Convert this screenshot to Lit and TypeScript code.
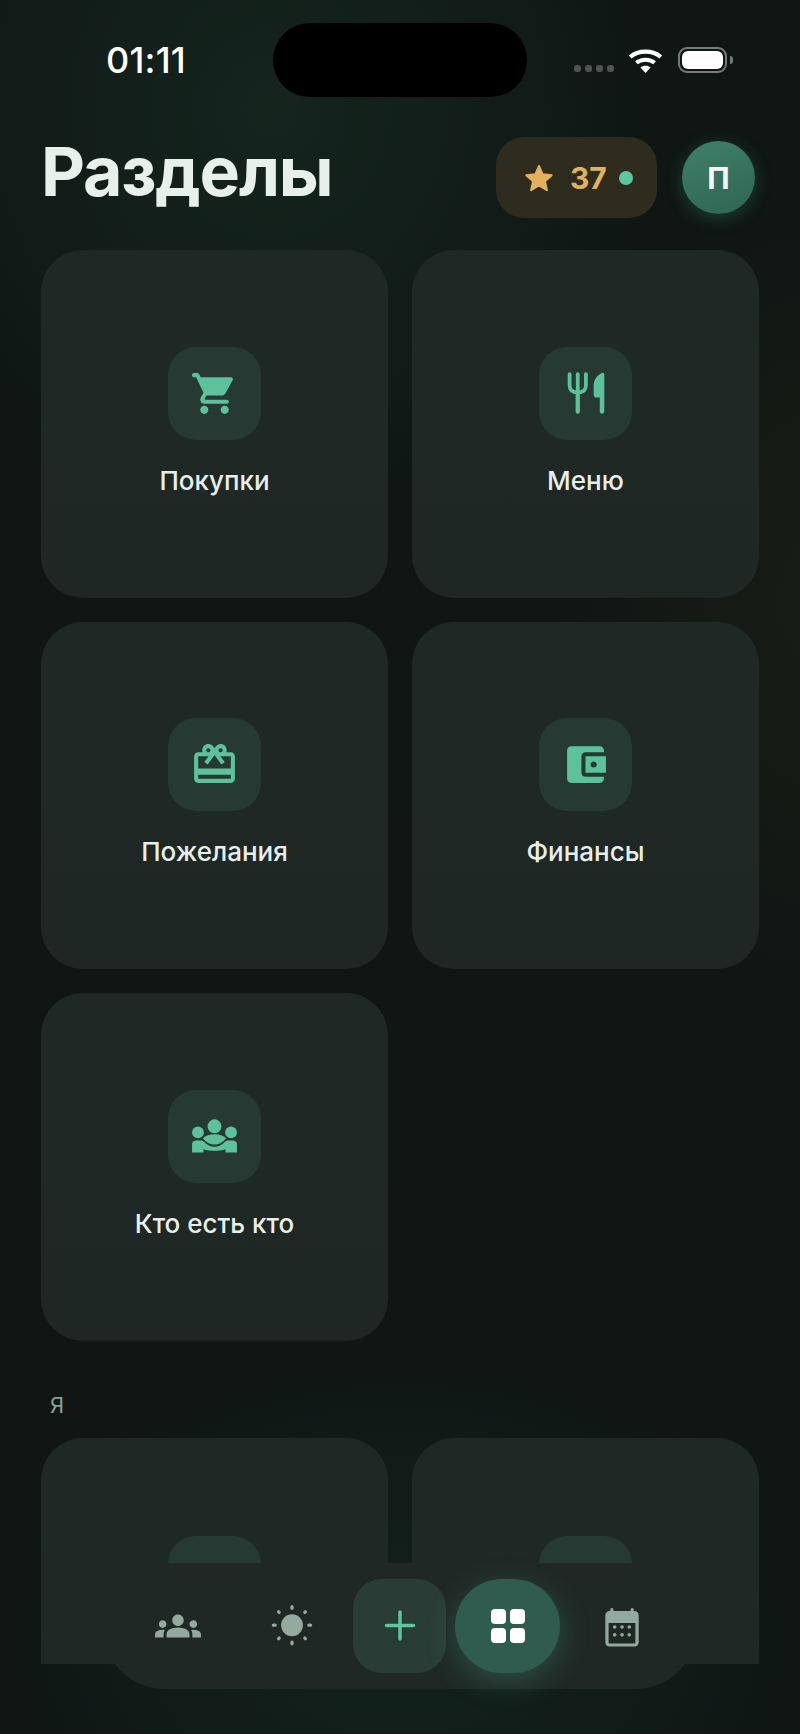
import { LitElement, html, css, svg } from "lit";
import { customElement } from "lit/decorators.js";

const cart = svg`<path d="M7 18c-1.1 0-1.99.9-1.99 2S5.9 22 7 22s2-.9 2-2-.9-2-2-2zM1.9 2C1.4 2 1 2.4 1 3s.4 1 .9 1H3l3.6 7.59-1.35 2.45c-.16.28-.25.61-.25.96 0 1.1.9 2 2 2h11c.55 0 1-.45 1-1s-.45-1-1-1H7.42c-.14 0-.25-.11-.25-.25l.03-.12.9-1.63h7.45c.75 0 1.41-.41 1.75-1.03l3.58-6.47c.08-.14.12-.31.12-.48 0-.55-.45-1-1-1H5.21l-.6-1.3C4.3 2.3 3.9 2 3.4 2H1.9zm15.1 16c-1.1 0-1.99.9-1.99 2s.89 2 1.99 2 2-.9 2-2-.9-2-2-2z"/>`;
const food = svg`<path d="M4.2 2.5V8c0 2.5 1.7 3.5 4 3.5s4-1 4-3.5V2.5M8.2 2.5v8" fill="none" stroke="currentColor" stroke-width="1.85" stroke-linecap="round"/><path d="M8.2 11v9.9" fill="none" stroke="currentColor" stroke-width="2.1" stroke-linecap="round"/><path d="M21.2 2.7c0-.7-.6-1.1-1.2-.8-2.4 1.1-4 3.5-4 6.3v4.4c0 .8.6 1.4 1.4 1.4H19v6.8c0 .6.5 1.1 1.1 1.1s1.1-.5 1.1-1.1z"/>`;
const gift = svg`<path d="M20 6h-2.18c.11-.31.18-.65.18-1 0-1.66-1.34-3-3-3-1.05 0-1.96.54-2.5 1.35l-.5.67-.5-.68C10.96 2.54 10.05 2 9 2 7.34 2 6 3.34 6 5c0 .35.07.69.18 1H4c-1.11 0-1.99.89-1.99 2L2 19c0 1.11.89 2 2 2h16c1.11 0 2-.89 2-2V8c0-1.11-.89-2-2-2zm-5-2c.55 0 1 .45 1 1s-.45 1-1 1-1-.45-1-1 .45-1 1-1zM9 4c.55 0 1 .45 1 1s-.45 1-1 1-1-.45-1-1 .45-1 1-1zm11 15H4v-2h16v2zm0-5H4V8h5.08L7 10.83 8.62 12 11 8.76l1-1.36 1 1.36L15.38 12 17 10.83 14.92 8H20v6z"/>`;
const wallet = svg`<path d="M21 18v1c0 1.1-.9 2-2 2H5c-1.11 0-2-.9-2-2V5c0-1.1.89-2 2-2h14c1.1 0 2 .9 2 2v1h-9c-1.11 0-2 .9-2 2v8c0 1.1.89 2 2 2h9zm-9-2h10V8H12v8zm4-2.5c-.83 0-1.5-.67-1.5-1.5s.67-1.5 1.5-1.5 1.5.67 1.5 1.5-.67 1.5-1.5 1.5z"/>`;
const who = svg`<circle cx="12" cy="7" r="3.4"/><circle cx="3.9" cy="10" r="2.9"/><circle cx="20.1" cy="10" r="2.9"/><path d="M6.3 12.8C7.6 11.5 9.7 10.9 12 10.9C14.3 10.9 16.4 11.5 17.7 12.8C16.4 14.6 14.4 15.9 12 15.9C9.6 15.9 7.6 14.6 6.3 12.8Z"/><path d="M1 15.6C1 14.6 1.9 13.9 3 13.9H5.3C6 13.9 6.6 14.2 7 14.7C8.4 16.2 10 17 12 17C14 17 15.6 16.2 17 14.7C17.4 14.2 18 13.9 18.7 13.9H21C22.1 13.9 23 14.6 23 15.6V19.8H17.4V18.2C15.8 18.8 14 19 12 19C10 19 8.2 18.8 6.6 18.2V19.8H1Z"/>`;
const tips = svg`<path d="M17.6 3.2v2M20.3 3.2v2" stroke="currentColor" stroke-width="1" fill="none"/>`;
const groups = svg`<path d="M12 12.75c1.63 0 3.07.39 4.24.9 1.08.48 1.76 1.56 1.76 2.73V18H6v-1.61c0-1.18.68-2.26 1.76-2.73 1.17-.52 2.61-.91 4.24-.91zM4 13c1.1 0 2-.9 2-2s-.9-2-2-2-2 .9-2 2 .9 2 2 2zm1.13 1.1c-.37-.06-.74-.1-1.13-.1-.99 0-1.93.21-2.78.58C.48 14.9 0 15.62 0 16.43V18h4.5v-1.61c0-.83.23-1.61.63-2.29zM20 13c1.1 0 2-.9 2-2s-.9-2-2-2-2 .9-2 2 .9 2 2 2zm4 3.43c0-.81-.48-1.53-1.22-1.85-.85-.37-1.79-.58-2.78-.58-.39 0-.76.04-1.13.1.4.68.63 1.46.63 2.29V18H24v-1.57zM12 6c1.66 0 3 1.34 3 3s-1.34 3-3 3-3-1.34-3-3 1.34-3 3-3z"/>`;
const sun = svg`<circle cx="12" cy="11.6" r="5.7"/><g stroke="currentColor" stroke-width="1.7" stroke-linecap="round" fill="none"><path d="M12 1.9v.9M12 20.4v.9M2.3 11.6h.9M20.8 11.6h.9M5 4.6l.3.3M18.7 18.3l.3.3M5 18.6l.3-.3M18.7 4.9l.3-.3"/></g>`;
const calendar = svg`<path fill-rule="evenodd" d="M6.7 2.6c.5 0 .8.4.8.8v.8h9v-.8c0-.4.3-.8.8-.8s.8.4.8.8v.8h.4c1.3 0 2.2 1 2.2 2.2v14.2c0 1.2-1 2.1-2.2 2.1H5.5c-1.2 0-2.2-.9-2.2-2.1V6.4c0-1.2 1-2.2 2.2-2.2h.4v-.8c0-.4.3-.8.8-.8zM5 10.4v10.2c0 .3.2.5.5.5h13c.3 0 .5-.2.5-.5V10.4z"/><g><circle cx="8.2" cy="12.5" r=".95"/><circle cx="12" cy="12.5" r=".95"/><circle cx="15.8" cy="12.5" r=".95"/><circle cx="8.2" cy="16.6" r=".95"/><circle cx="12" cy="16.6" r=".95"/><circle cx="15.8" cy="16.6" r=".95"/></g>`;
const star = svg`<path d="M12 3.5l2.6 5.9 6.4.6-4.8 4.3 1.4 6.3L12 17.3l-5.6 3.3 1.4-6.3L3 10l6.4-.6z" stroke="currentColor" stroke-width="1.4" stroke-linejoin="round"/>`;

const ic = (p: unknown) => html`<svg viewBox="0 0 24 24" fill="currentColor">${p}</svg>`;

@customElement("app-root")
export class AppRoot extends LitElement {
  static styles = css`
    :host { display: block; }
    * { box-sizing: border-box; }
    .screen {
      position: relative; width: 800px; height: 1734px; overflow: hidden;
      font-family: Inter, "Liberation Sans", sans-serif;
      background:
        radial-gradient(ellipse 400px 430px at 270px 110px, rgba(30,62,48,.36), rgba(30,62,48,0) 100%),
        radial-gradient(ellipse 260px 420px at 820px 600px, rgba(60,50,25,.22), rgba(60,50,25,0) 100%),
        radial-gradient(ellipse 420px 300px at 400px 1640px, rgba(24,52,42,.4), rgba(24,52,42,0) 100%),
        #0f1614;
      display: flex; flex-direction: column; padding-top: 23px;
    }
    .status { display: flex; align-items: center; height: 74px; padding-left: 106px; flex: none; }
    .time { width: 167px; color: #fff; font-size: 36px; font-weight: 500; letter-spacing: .2px; line-height: 74px; }
    .island { width: 254px; height: 74px; border-radius: 37px; background: #000; }
    .bars { display: flex; gap: 4px; margin-left: 47px; align-self: flex-start; margin-top: 42px; }
    .bars i { width: 7px; height: 7px; border-radius: 3px; background: #4e5553; display: block; }
    .wifi { width: 35px; height: 25px; margin-left: 14px; }
    .batt { display: flex; align-items: center; margin-left: 15px; }
    .batt b { display: block; width: 49px; height: 26px; border: 2px solid #747a78; border-radius: 9px; padding: 2px; }
    .batt b::before { content: ""; display: block; height: 100%; border-radius: 6px; background: #fff; }
    .batt u { display: block; width: 3px; height: 8px; margin-left: 3px; background: #747a78; border-radius: 0 3px 3px 0; }
    .head { display: flex; align-items: center; margin-top: 40px; height: 81px; padding: 0 45px 0 41px; flex: none; }
    h1 { margin: 0 auto 14px 0; font-size: 68px; font-weight: 700; letter-spacing: -1.2px; color: #e8f0ec; line-height: 80px; }
    .badge { display: flex; align-items: center; width: 161px; height: 81px; border-radius: 28px; background: #2e2b1f; padding-left: 26px; color: #e2b05e; }
    .badge svg { width: 34px; height: 34px; }
    .badge span { font-size: 30px; font-weight: 700; margin-left: 14px; }
    .badge i { width: 14px; height: 14px; border-radius: 50%; background: #5fc6a2; margin-left: 12px; display: block; }
    .avatar { width: 73px; height: 73px; border-radius: 50%; margin-left: 25px; color: #f3f8f6; font-size: 30px; font-weight: 700;
      display: flex; align-items: center; justify-content: center;
      background: linear-gradient(160deg, #3f8069, #2f6553);
      box-shadow: 0 4px 18px rgba(70,170,135,.28); }
    .scroll { height: 1414px; margin-top: 32px; padding: 0 41px; overflow: hidden; flex: none; }
    .grid { display: grid; grid-template-columns: 347px 347px; grid-auto-rows: 347.5px; gap: 24px; }
    .card { background: linear-gradient(180deg, #1e2926, #1e2724); border-radius: 42px; padding-bottom: 2px; display: flex; flex-direction: column; align-items: center; justify-content: center; gap: 23px; }
    .card.open { justify-content: flex-start; padding-top: 98px; }
    .tile { width: 93px; height: 93px; flex: none; border-radius: 28px; background: #263933; color: #5dc29c; display: flex; align-items: center; justify-content: center; }
    .tile svg { width: 49px; height: 49px; }
    .label { font-size: 26px; font-weight: 500; line-height: 36px; color: #e8efeb; }
    .sect { margin: 40px 0 9.5px 9px; font-size: 22px; font-weight: 400; line-height: 48px; color: #8a9e96; }
    .nav { position: absolute; left: 102px; top: 1563px; width: 596px; height: 126px; border-radius: 63px; background: #1f2825; padding: 16px 23px; display: flex; gap: 9px; align-items: stretch; }
    .item { width: 105px; display: flex; align-items: center; justify-content: center; color: #93aa9f; border-radius: 47px; }
    .item svg { width: 46px; height: 46px; }
    .add { width: 93px; border-radius: 29px; background: #293d36; color: #5dc9a0; }
    .active { background: #2f5c4f; box-shadow: 0 8px 30px rgba(90,180,150,.28); color: #fff; }
    .four { display: grid; grid-template-columns: 15px 15px; grid-auto-rows: 15px; gap: 4px; }
    .four i { background: #fff; border-radius: 4px; display: block; }
  `;

  card(icon: unknown, label: string) {
    return html`<div class="card"><div class="tile">${ic(icon)}</div><div class="label">${label}</div></div>`;
  }

  render() {
    return html`<div class="screen">
      <div class="status">
        <div class="time">01:11</div>
        <div class="island"></div>
        <div class="bars"><i></i><i></i><i></i><i></i></div>
        <svg class="wifi" viewBox="0 0 35 25" fill="none" stroke="#fff">
          <path d="M2.2 9C10.2 1.8 24.8 1.8 32.8 9" stroke-width="4.2"/>
          <path d="M8.4 14.8C13.2 10.6 21.8 10.6 26.6 14.8" stroke-width="4"/>
          <path d="M17.5 25L12.4 19.4C15.2 17.2 19.8 17.2 22.6 19.4Z" fill="#fff" stroke="none"/>
        </svg>
        <div class="batt"><b></b><u></u></div>
      </div>
      <div class="head">
        <h1>Разделы</h1>
        <div class="badge">${ic(star)}<span>37</span><i></i></div>
        <div class="avatar">П</div>
      </div>
      <div class="scroll">
        <div class="grid">
          ${this.card(cart, "Покупки")}
          ${this.card(food, "Меню")}
          ${this.card(gift, "Пожелания")}
          ${this.card(wallet, "Финансы")}
          ${this.card(who, "Кто есть кто")}
        </div>
        <div class="sect">Я</div>
        <div class="grid">
          <div class="card open"><div class="tile"></div></div>
          <div class="card open"><div class="tile">${ic(tips)}</div></div>
        </div>
      </div>
      <div class="nav">
        <div class="item">${ic(groups)}</div>
        <div class="item">${ic(sun)}</div>
        <div class="item add"><svg viewBox="0 0 46 46" fill="none" stroke="currentColor" stroke-width="3.4" stroke-linecap="round"><path d="M23 9v27M9.5 22.5h27"/></svg></div>
        <div class="item active"><div class="four"><i></i><i></i><i></i><i></i></div></div>
        <div class="item">${ic(calendar)}</div>
      </div>
    </div>`;
  }
}
